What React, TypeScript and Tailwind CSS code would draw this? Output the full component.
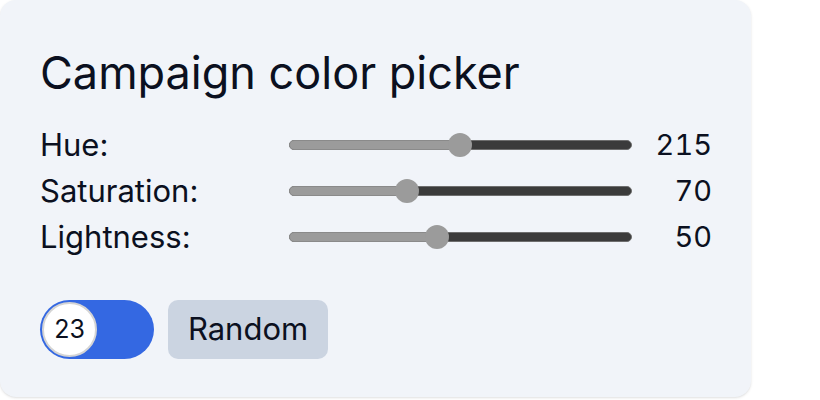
import React from "react";

const rows = [
  { label: "Hue:", value: "215", pos: 460 - 289 },
  { label: "Saturation:", value: "70", pos: 407 - 289 },
  { label: "Lightness:", value: "50", pos: 437 - 289 },
];

function Slider({ pos }: { pos: number }) {
  return (
    <div className="relative h-[24px] w-[343px]">
      <div className="absolute left-0 right-0 top-[7px] h-[10px] rounded-full bg-[#3b3b3b] border border-[#6e6e6e]" />
      <div
        className="absolute left-0 top-[7px] h-[10px] rounded-l-full bg-[#9b9b9b] border border-[#8a8a8a]"
        style={{ width: pos }}
      />
      <div
        className="absolute top-0 h-[24px] w-[24px] rounded-full bg-[#9b9b9b]"
        style={{ left: pos - 12 }}
      />
    </div>
  );
}

export default function App() {
  return (
    <div className="w-[820px] h-[400px] bg-white" style={{ fontFamily: "Inter, 'Noto Sans', sans-serif" }}>
      <div className="w-[751px] h-[397px] rounded-[16px] bg-[#f1f4f9] shadow-sm pl-[40px] pr-[39px] pt-[50px] text-[#0b1020]">
        <h1 className="text-[45px] leading-[46px] font-normal">Campaign color picker</h1>
        <div className="mt-[26px] flex flex-col">
          {rows.map((r) => (
            <div key={r.label} className="flex h-[46px] items-center">
              <div className="w-[249px] text-[31px]">{r.label}</div>
              <Slider pos={r.pos} />
              <div className="flex-1 text-right text-[29px] tabular-nums">{r.value}</div>
            </div>
          ))}
        </div>
        <div className="mt-[40px] flex items-center gap-[14px]">
          <div className="relative h-[59px] w-[114px] rounded-full bg-[#3468e2]">
            <div className="absolute left-[2px] top-[2px] flex h-[55px] w-[55px] items-center justify-center rounded-full bg-white border-2 border-[#d4d4d4] text-[25px]">
              23
            </div>
          </div>
          <button className="h-[59px] w-[160px] rounded-[10px] bg-[#cbd4e1] text-[31px]">Random</button>
        </div>
      </div>
    </div>
  );
}
